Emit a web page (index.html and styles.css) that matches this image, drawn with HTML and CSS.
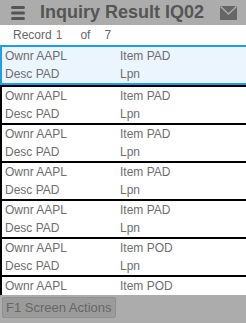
FILE: index.html
```html
<!doctype html>
<html>
<head>
  <link rel="stylesheet" href="styles.css">
</head>
<body>
  <div class="header">
    <svg class="menuIcon" width="16" height="16" viewBox="0 0 16 16">
      <rect x="1" y="1" width="14" height="3" rx="1.5" fill="#555"/>
      <rect x="1" y="6.5" width="14" height="3" rx="1.5" fill="#555"/>
      <rect x="1" y="12" width="14" height="3" rx="1.5" fill="#555"/>
    </svg>
    <div class="title">Inquiry Result IQ02</div>
    <svg class="mailIcon" width="17" height="14" viewBox="0 0 17 14">
      <rect x="0" y="0" width="17" height="14" fill="#666"/>
      <polyline points="0.5,0.5 8.5,8 16.5,0.5" fill="none" stroke="#aaa" stroke-width="1.5"/>
    </svg>
  </div>

  <div class="recordLine">
    <span>Record</span><span class="recNum">1</span><span class="recOf">of</span><span class="recTotal">7</span>
  </div>

  <div class="list">
    <div class="row selected">
      <div class="cell">Ownr AAPL</div><div class="cell">Item PAD</div>
      <div class="cell">Desc PAD</div><div class="cell">Lpn</div>
    </div>
    <div class="row">
      <div class="cell">Ownr AAPL</div><div class="cell">Item PAD</div>
      <div class="cell">Desc PAD</div><div class="cell">Lpn</div>
    </div>
    <div class="row">
      <div class="cell">Ownr AAPL</div><div class="cell">Item PAD</div>
      <div class="cell">Desc PAD</div><div class="cell">Lpn</div>
    </div>
    <div class="row">
      <div class="cell">Ownr AAPL</div><div class="cell">Item PAD</div>
      <div class="cell">Desc PAD</div><div class="cell">Lpn</div>
    </div>
    <div class="row">
      <div class="cell">Ownr AAPL</div><div class="cell">Item PAD</div>
      <div class="cell">Desc PAD</div><div class="cell">Lpn</div>
    </div>
    <div class="row">
      <div class="cell">Ownr AAPL</div><div class="cell">Item POD</div>
      <div class="cell">Desc PAD</div><div class="cell">Lpn</div>
    </div>
    <div class="row">
      <div class="cell">Ownr AAPL</div><div class="cell">Item POD</div>
    </div>
  </div>

  <div class="footer">
    <button class="actionBtn">F1 Screen Actions</button>
  </div>
</body>
</html>
```

FILE: styles.css
```css
body{
  margin: 0;
  width: 246px;
  height: 323px;
  overflow: hidden;
  font-family: "Liberation Sans", Arial, sans-serif;
  color: #666;
}
.header{
  height: 25px;
  background: #acacac;
  display: flex;
  align-items: center;
}
.menuIcon{
  margin-left: 10px;
  margin-right: 14px;
}
.title{
  font-size: 18px;
  font-weight: bold;
  color: #555;
  flex: 1;
}
.mailIcon{
  margin-right: 9px;
}
.recordLine{
  height: 20px;
  line-height: 20px;
  font-size: 12px;
  padding-left: 13px;
  color: #666;
}
.recNum{
  margin-left: 4px;
  color: #8a6d5a;
}
.recOf{
  margin-left: 18px;
}
.recTotal{
  margin-left: 14px;
}
.list{
  height: 250px;
  overflow: hidden;
}
.row{
  display: grid;
  grid-template-columns: 115px 1fr;
  border-top: 2px solid #000;
  border-left: 2px solid #000;
  padding-left: 3px;
  font-size: 12px;
  line-height: 18px;
  color: #6e6e6e;
}
.row.selected{
  background: #eaf5fe;
  border-top: 2px solid #1e9cf0;
  border-bottom: 2px solid #1e9cf0;
  border-left: 2px solid #1e9cf0;
}
.cell{
  white-space: nowrap;
}
.footer{
  height: 28px;
  background: #acacac;
}
.actionBtn{
  margin: 2px 0 0 2px;
  height: 21px;
  padding: 0 3px;
  background: #9b9b9b;
  border: 1px solid #909090;
  border-radius: 2px;
  font-family: "Liberation Sans", Arial, sans-serif;
  font-size: 13px;
  color: #666;
}
```
